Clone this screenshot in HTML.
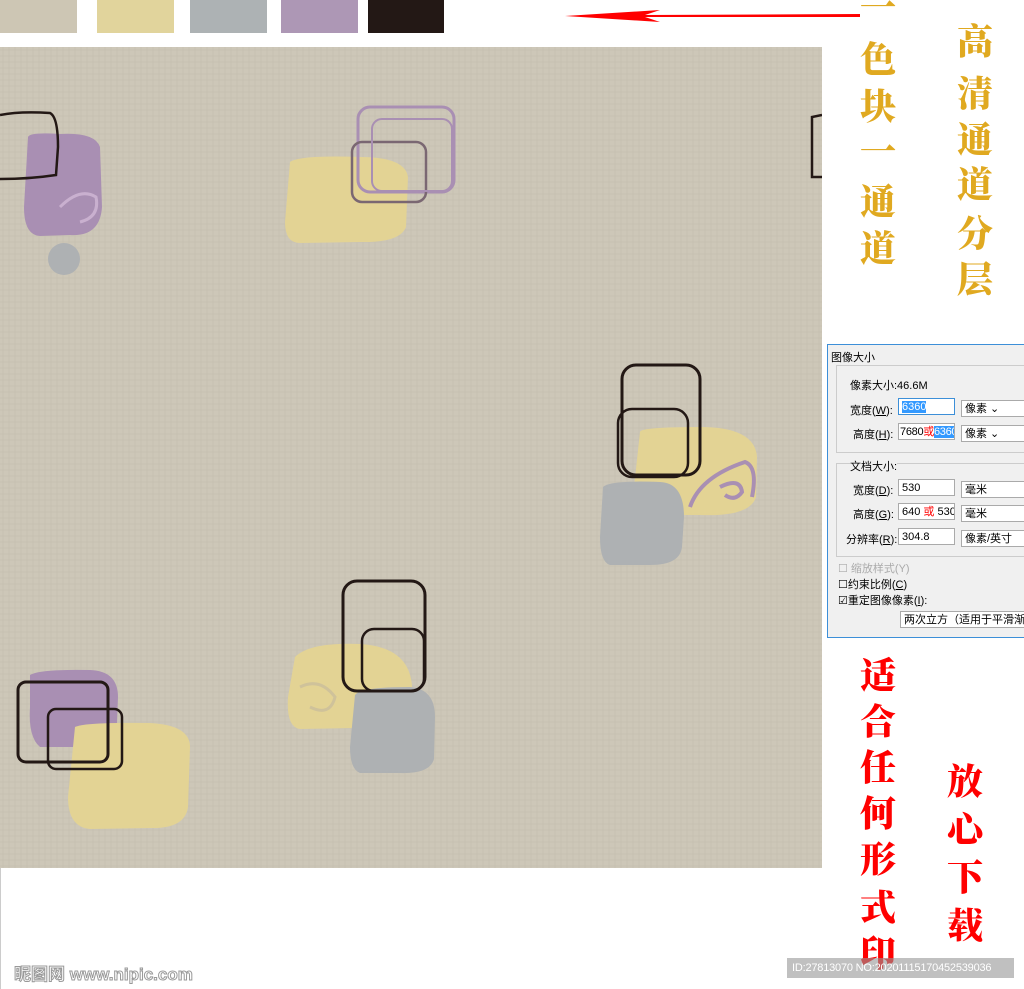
<!DOCTYPE html>
<html><head><meta charset="utf-8"><style>
body{margin:0;width:1024px;height:989px;background:#fff;position:relative;overflow:hidden;font-family:"Liberation Sans","Noto Sans CJK SC",sans-serif}
.sw{position:absolute;top:0;height:33px}
.v{position:absolute;font-family:"Noto Serif CJK SC","Noto Sans CJK SC",serif;font-weight:900;font-size:36px;line-height:36px;text-align:center;width:44px}
.v span{display:block;position:absolute;left:0;width:44px}
.dlg{position:absolute;left:827px;top:344px;width:197px;height:292px;background:#f0f0f0;border:1px solid #3c8fd8;font-size:11px;color:#000}
.dlg div{position:absolute;white-space:nowrap}
.in{background:#fff;border:1px solid #aaa;height:17px;line-height:17px;padding-left:3px;box-sizing:border-box;overflow:hidden}
</style></head><body>
<div class="sw" style="left:0;width:77px;background:#cdc6b4"></div>
<div class="sw" style="left:97px;width:77px;background:#e1d49c"></div>
<div class="sw" style="left:190px;width:77px;background:#adb2b4"></div>
<div class="sw" style="left:281px;width:77px;background:#ad97b5"></div>
<div class="sw" style="left:368px;width:76px;background:#231815"></div>
<svg style="position:absolute;left:565px;top:8px" width="300" height="16"><path d="M0 8 L95 2 L80 7 L295 6 L295 9 L80 9 L95 14 Z" fill="#f00"/></svg>

<svg style="position:absolute;left:0;top:47px" width="822" height="821">
<defs><pattern id="t" width="6" height="6" patternUnits="userSpaceOnUse"><rect width="6" height="6" fill="#cdc7b8"/><path d="M0 3H6M3 0V6" stroke="#c6c0b0" stroke-width="0.7"/></pattern></defs>
<rect width="822" height="821" fill="url(#t)"/>
<path d="M28 90 Q30 85 60 87 Q95 85 100 100 L102 160 Q100 190 70 188 L40 189 Q24 188 24 160 Z" fill="#a98fb3"/>
<circle cx="64" cy="212" r="16" fill="#aeb1b3"/>
<path d="M0 68 Q20 64 50 66 Q58 70 58 100 L56 128 Q30 132 0 132" fill="none" stroke="#231815" stroke-width="2.5"/>
<path d="M60 160 Q80 140 96 150 Q100 170 80 175" fill="none" stroke="#c9b0cf" stroke-width="3"/>
<path d="M290 115 Q300 108 360 110 Q405 110 408 130 L406 180 Q400 196 360 195 L300 196 Q285 196 285 175 Z" fill="#e3d394"/>
<rect x="358" y="60" width="96" height="85" rx="12" fill="none" stroke="#a98fb3" stroke-width="3"/>
<rect x="352" y="95" width="74" height="60" rx="10" fill="none" stroke="#7a6772" stroke-width="2.5"/>
<rect x="372" y="72" width="80" height="72" rx="10" fill="none" stroke="#a98fb3" stroke-width="2"/>
<path d="M822 68 L812 70 L812 130 L822 130" fill="none" stroke="#231815" stroke-width="2.5"/>
<path d="M640 385 Q640 380 700 380 Q755 380 757 410 L756 450 Q750 470 700 468 L650 468 Q635 465 634 440 Z" fill="#e3d394"/>
<path d="M603 440 Q610 433 660 435 Q684 436 684 470 L682 500 Q680 518 650 518 L610 518 Q600 515 600 490 Z" fill="#aeb1b3"/>
<path d="M690 460 Q700 430 745 415 Q758 420 752 450 M720 440 Q740 430 742 445 Q735 455 725 448" fill="none" stroke="#a98fb3" stroke-width="4"/>
<rect x="622" y="318" width="78" height="110" rx="14" fill="none" stroke="#231815" stroke-width="3"/>
<rect x="618" y="362" width="70" height="68" rx="14" fill="none" stroke="#231815" stroke-width="2.5"/>
<path d="M295 610 Q310 595 360 597 Q410 600 412 640 L405 680 L300 682 Q286 680 288 650 Z" fill="#e3d394"/>
<path d="M355 648 Q360 640 410 640 Q435 642 435 670 L434 712 Q430 727 400 726 L360 726 Q350 722 350 700 Z" fill="#aeb1b3"/>
<rect x="343" y="534" width="82" height="110" rx="14" fill="none" stroke="#231815" stroke-width="3"/>
<rect x="362" y="582" width="62" height="62" rx="12" fill="none" stroke="#231815" stroke-width="2.5"/>
<path d="M300 640 Q320 630 335 650 Q330 670 310 660" fill="none" stroke="#cfc29a" stroke-width="3"/>
<path d="M30 628 Q40 622 90 623 Q118 624 118 650 L116 700 L40 700 Q28 690 30 660 Z" fill="#a98fb3"/>
<path d="M75 680 Q85 675 150 676 Q190 678 190 700 L188 760 Q185 782 150 781 L90 782 Q68 780 68 750 Z" fill="#e3d394"/>
<rect x="18" y="635" width="90" height="80" rx="8" fill="none" stroke="#231815" stroke-width="3"/>
<rect x="48" y="662" width="74" height="60" rx="8" fill="none" stroke="#231815" stroke-width="2.5"/>
</svg>

<div class="v" style="left:856px;top:0;color:#e0a920">
<span style="top:-12px">一</span><span style="top:40px">色</span><span style="top:87px">块</span><span style="top:132px">一</span><span style="top:182px">通</span><span style="top:229px">道</span></div>
<div class="v" style="left:953px;top:0;color:#e0a920">
<span style="top:22px">高</span><span style="top:74px">清</span><span style="top:120px">通</span><span style="top:165px">道</span><span style="top:214px">分</span><span style="top:260px">层</span></div>

<div class="dlg">
<div style="left:3px;top:4px">图像大小</div>
<div style="left:8px;top:20px;width:190px;height:86px;border:1px solid #ccc"></div>
<div style="left:22px;top:32px">像素大小:46.6M</div>
<div style="left:22px;top:57px">宽度(<u>W</u>):</div>
<div class="in" style="left:70px;top:53px;width:57px;border-color:#3c8fd8"><span style="background:#3399ff;color:#fff">6360</span></div>
<div class="in" style="left:133px;top:55px;width:64px">像素 ⌄</div>
<div style="left:25px;top:81px">高度(<u>H</u>):</div>
<div class="in" style="left:70px;top:78px;width:57px;padding-left:1px;letter-spacing:-0.3px">7680<span style="color:#f00">或</span><span style="background:#3399ff;color:#fff">6360</span></div>
<div class="in" style="left:133px;top:80px;width:64px">像素 ⌄</div>
<div style="left:8px;top:118px;width:190px;height:92px;border:1px solid #ccc"></div>
<div style="left:22px;top:113px;background:#f0f0f0">文档大小:</div>
<div style="left:25px;top:137px">宽度(<u>D</u>):</div>
<div class="in" style="left:70px;top:134px;width:57px">530</div>
<div class="in" style="left:133px;top:136px;width:64px">毫米</div>
<div style="left:25px;top:161px">高度(<u>G</u>):</div>
<div class="in" style="left:70px;top:158px;width:57px">640 <span style="color:#f00">或</span> 530</div>
<div class="in" style="left:133px;top:160px;width:64px">毫米</div>
<div style="left:18px;top:186px">分辨率(<u>R</u>):</div>
<div class="in" style="left:70px;top:183px;width:57px">304.8</div>
<div class="in" style="left:133px;top:185px;width:64px">像素/英寸</div>
<div style="left:10px;top:215px;color:#aaa">☐ 缩放样式(Y)</div>
<div style="left:10px;top:231px">☐约束比例(<u>C</u>)</div>
<div style="left:10px;top:247px">☑重定图像像素(<u>I</u>):</div>
<div class="in" style="left:72px;top:266px;width:126px;background:#fff">两次立方（适用于平滑渐变</div>
</div>

<div class="v" style="left:856px;top:0;color:#f00">
<span style="top:656px">适</span><span style="top:702px">合</span><span style="top:748px">任</span><span style="top:794px">何</span><span style="top:840px">形</span><span style="top:888px">式</span><span style="top:934px">印</span></div>
<div class="v" style="left:943px;top:0;color:#f00">
<span style="top:762px">放</span><span style="top:810px">心</span><span style="top:858px">下</span><span style="top:906px">载</span></div>

<div style="position:absolute;left:787px;top:958px;width:227px;height:20px;background:rgba(150,150,150,.6);color:#fff;font-size:11px;line-height:20px;padding-left:5px;box-sizing:border-box;white-space:nowrap;overflow:hidden;letter-spacing:-0.2px">ID:27813070 NO:20201115170452539036</div>
<div style="position:absolute;left:14px;top:960px;font-size:17px;font-weight:bold;color:#fff;-webkit-text-stroke:1px #999">昵图网 www.nipic.com</div>
<div style="position:absolute;left:0;top:868px;width:1px;height:121px;background:#ccc"></div>
</body></html>
